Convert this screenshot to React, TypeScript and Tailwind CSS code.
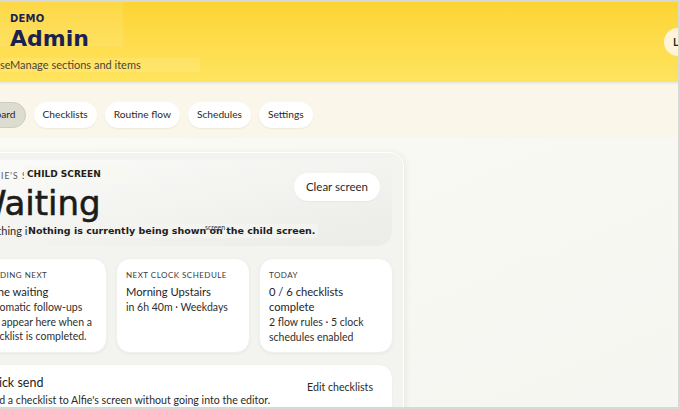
import React from 'react';

const body = "font-['Lato','Liberation_Sans',sans-serif]";
const dv = "font-['DejaVu_Sans',sans-serif]";

const NAV = ['Checklists', 'Routine flow', 'Schedules', 'Settings'];

function InfoCard({ label, title, lines }: { label: string; title: string[]; lines: string[] }) {
  return (
    <div className="bg-white rounded-[14px] border border-[#f0f0ec] shadow-[0_1px_3px_rgba(0,0,0,0.05)] px-[9px] pt-[10px] pb-[8px]">
      <p className="text-[8px] tracking-[0.06em] uppercase text-[#3b3b38] leading-[12px]">{label}</p>
      <div className="mt-[3px] text-[11.2px] leading-[15px] text-[#24241f]">
        {title.map((t) => <p key={t}>{t}</p>)}
      </div>
      <div className="mt-[1px] text-[10.5px] leading-[14.5px] text-[#2f2f2a]">
        {lines.map((t) => <p key={t} className="whitespace-nowrap">{t}</p>)}
      </div>
    </div>
  );
}

export default function App() {
  return (
    <div className={`w-[680px] h-[409px] overflow-hidden border-y-2 border-r-2 border-[#d8d8d4] bg-[#f8f8f3] flex flex-col ${body}`}>
      {/* header */}
      <header className="h-[80px] shrink-0 bg-gradient-to-b from-[#fdd432] to-[#ffe45f] flex items-start justify-between">
        <div className="flex flex-col">
          <div className="w-[123px] h-[45px] bg-white/10 pl-[10px] pt-[11px] text-[#1b2150]">
            <p className={`${dv} text-[10px] font-bold leading-[12px] tracking-[0.02em]`}>DEMO</p>
            <p className={`${dv} text-[22px] font-bold leading-[24px] mt-[2px]`}>Admin</p>
          </div>
          <div className="mt-[11px] w-[200px] h-[14px] bg-white/10 flex items-center text-[11px] text-[#4a4636]">
            <span className="w-[10px] overflow-hidden">se</span>
            <span>Manage sections and items</span>
          </div>
        </div>
        <div className="mt-[26px] -mr-[14px] w-[28px] h-[28px] rounded-full bg-[#fff4d8] flex items-center pl-[9px] text-[11px] font-semibold text-[#222]">
          L
        </div>
      </header>
      <div className="h-[2px] shrink-0 bg-[#ecece6]" />

      {/* nav */}
      <nav className="h-[54px] shrink-0 bg-[#fbf6ea] flex items-center gap-[8px] -ml-[43px] pt-[8px] shadow-[0_6px_8px_rgba(240,236,225,0.7)]">
        <span className="h-[26px] px-[9px] rounded-full bg-[#dcdcd0] border border-[#cdcdbf] flex items-center text-[10.2px] text-[#2a2a26]">Dashboard</span>
        {NAV.map((n) => (
          <span key={n} className="h-[26px] px-[9px] rounded-full bg-white shadow-[0_1px_2px_rgba(0,0,0,0.06)] flex items-center text-[10.2px] text-[#2a2a26]">
            {n}
          </span>
        ))}
      </nav>

      {/* main */}
      <main className="flex-1 bg-gradient-to-br from-[#fbfbf5] to-[#f5f5f1] pt-[14px]">
        <div className="-ml-[43px] w-[447px] h-full rounded-tr-[14px] bg-[#f3f3f0] border border-white shadow-[2px_0_6px_rgba(0,0,0,0.06)] pt-[6px] pl-[15px] pr-[10px]">
          {/* child screen */}
          <div className="h-[88px] rounded-[16px] border border-[#f3f3ef] bg-gradient-to-br from-[#fbfbf9] to-[#ebebe8] flex justify-between pl-[9px] pr-[12px] pt-[12px]">
            <div className="flex flex-col -mt-[3px]">
              <div className="relative h-[12px]">
                <p className="text-[8.5px] tracking-[0.12em] leading-[12px] text-[#55554f] uppercase mt-[1px]">Alfie's screen</p>
                <span className={`absolute left-[41px] -top-[3px] w-[102px] h-[16px] bg-[#f8f8f2] pl-[3px] ${dv} text-[9px] font-bold leading-[16px] text-[#1e1e1c]`}>
                  CHILD SCREEN
                </span>
              </div>
              <p className={`${dv} -ml-[10px] mt-[4px] text-[34px] leading-[36px] text-[#1c1c1a] [-webkit-text-stroke:0.6px_#1c1c1a]`}>Waiting</p>
              <div className="relative mt-[3px] h-[14px]">
                <p className="text-[11px] leading-[14px] text-[#2b2b28] whitespace-nowrap">Nothing is currently being shown on the child screen.</p>
                <span className={`absolute left-[45px] top-0 w-[290px] bg-[#f3f3f0] ${dv} text-[9.5px] font-bold leading-[14px] text-[#1e1e1c] whitespace-nowrap`}>
                  Nothing is currently being shown on the child screen.
                </span>
                <span className="absolute left-[222px] -top-[2px] text-[7px] text-[#333]">screen</span>
              </div>
            </div>
            <button className="h-[28px] mt-[1px] px-[12px] rounded-full bg-white text-[11.5px] text-[#2a2a26] shadow-[0_1px_2px_rgba(0,0,0,0.04)]">
              Clear screen
            </button>
          </div>

          {/* info cards */}
          <div className="grid grid-cols-3 gap-[9px] mt-[11px]">
            <InfoCard
              label="Pending next"
              title={['None waiting']}
              lines={['Automatic follow-ups', 'will appear here when a', 'checklist is completed.']}
            />
            <InfoCard label="Next clock schedule" title={['Morning Upstairs']} lines={['in 6h 40m · Weekdays']} />
            <InfoCard
              label="Today"
              title={['0 / 6 checklists', 'complete']}
              lines={['2 flow rules · 5 clock', 'schedules enabled']}
            />
          </div>

          {/* quick send */}
          <div className="mt-[11px] h-[60px] rounded-[14px] bg-white border border-[#f0f0ec] flex justify-between items-start pl-[8px] pr-[19px]">
            <div className="pt-[9px]">
              <p className="text-[12.5px] leading-[17px] text-[#24241f]">Quick send</p>
              <p className="mt-[2px] text-[10.6px] leading-[14px] text-[#2b2b28] whitespace-nowrap">Send a checklist to Alfie's screen without going into the editor.</p>
            </div>
            <span className="mt-[15px] text-[10.6px] text-[#2a2a26]">Edit checklists</span>
          </div>
        </div>
      </main>
    </div>
  );
}
